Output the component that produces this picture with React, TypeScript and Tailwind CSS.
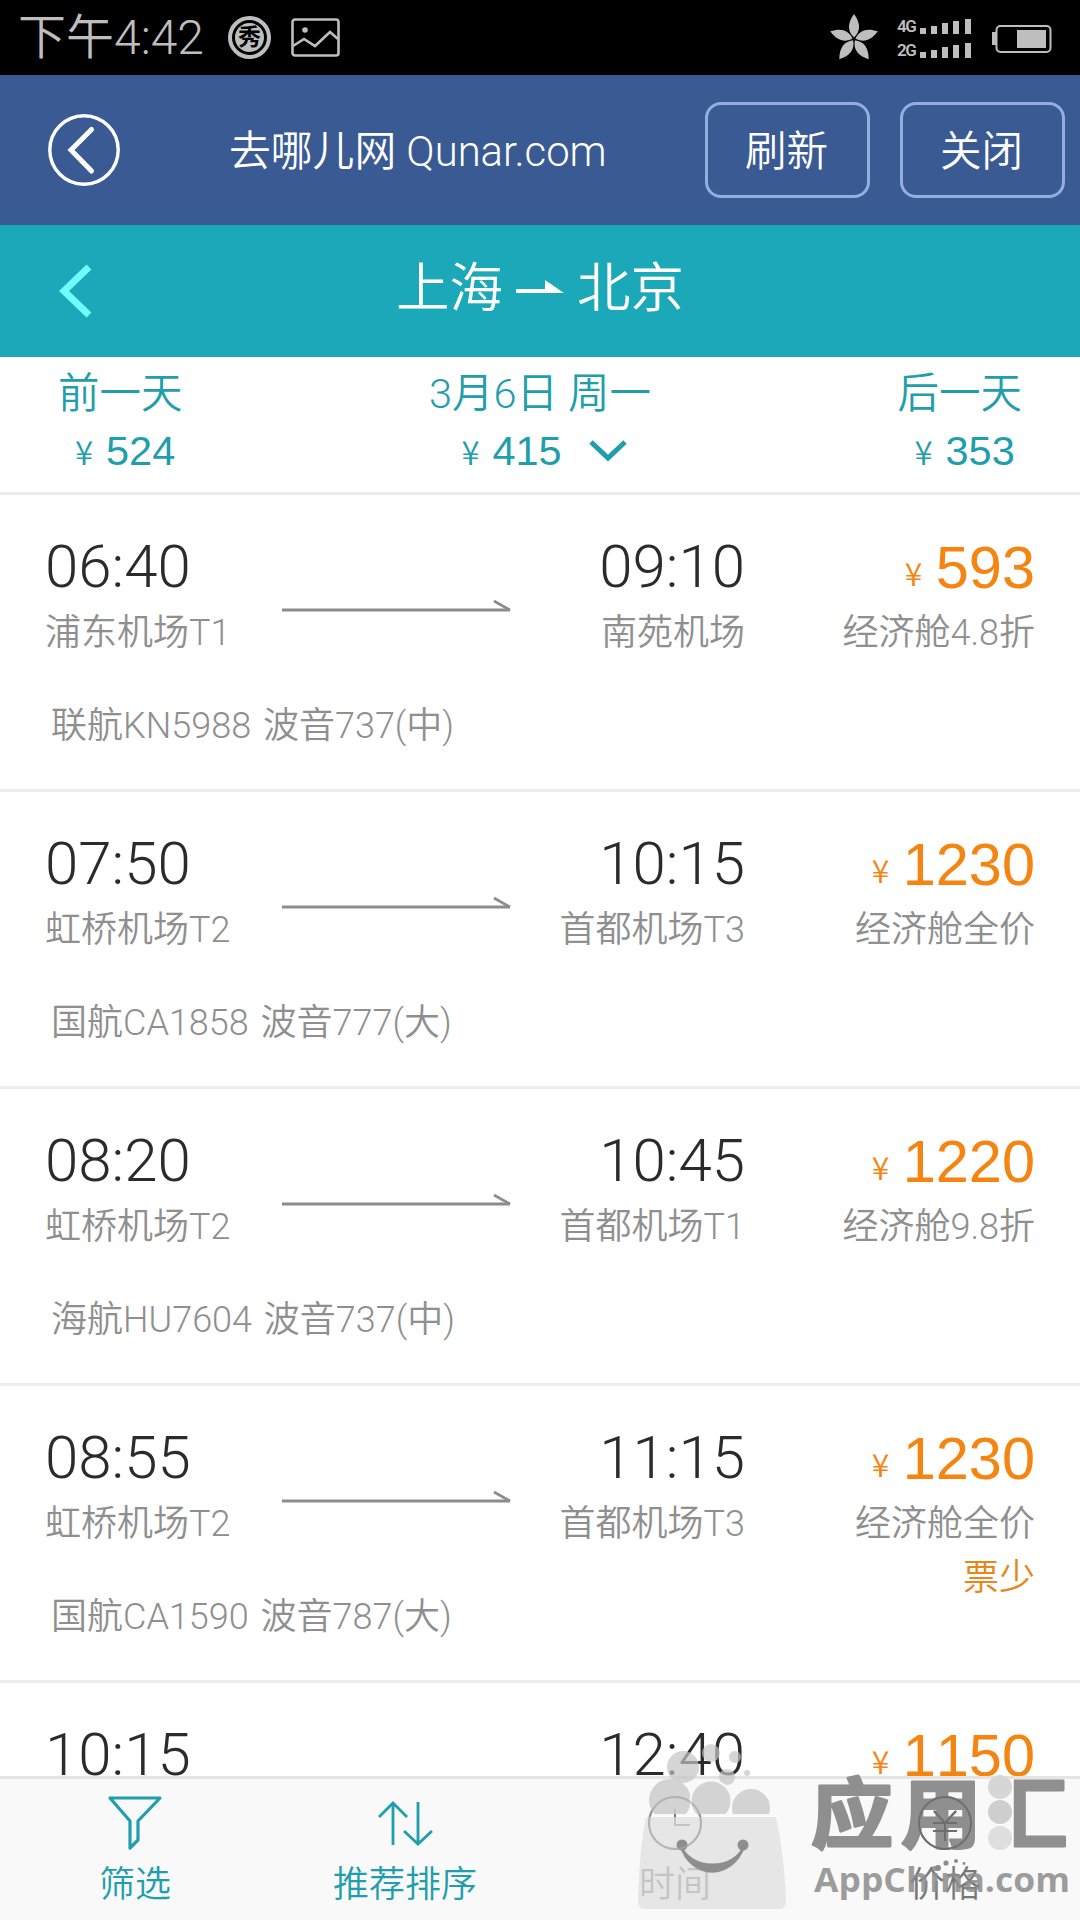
import React from "react";

type Flight = {
  dep: string;
  arr: string;
  from: string;
  to: string;
  price: string;
  cabin: string;
  plane: string;
  note?: string;
};

const flights: Flight[] = [
  { dep: "06:40", arr: "09:10", from: "浦东机场T1", to: "南苑机场", price: "593", cabin: "经济舱4.8折", plane: "联航KN5988 波音737(中)" },
  { dep: "07:50", arr: "10:15", from: "虹桥机场T2", to: "首都机场T3", price: "1230", cabin: "经济舱全价", plane: "国航CA1858 波音777(大)" },
  { dep: "08:20", arr: "10:45", from: "虹桥机场T2", to: "首都机场T1", price: "1220", cabin: "经济舱9.8折", plane: "海航HU7604 波音737(中)" },
  { dep: "08:55", arr: "11:15", from: "虹桥机场T2", to: "首都机场T3", price: "1230", cabin: "经济舱全价", plane: "国航CA1590 波音787(大)", note: "票少" },
  { dep: "10:15", arr: "12:40", from: "", to: "", price: "1150", cabin: "", plane: "" },
];

function StatusBar() {
  return (
    <div className="flex h-[75px] items-center bg-black pl-[18px] pr-[28px] text-[#bebebe]">
      <span className="pt-px text-[48px] leading-[74px] font-[350]">下午4:42</span>
      <span className="ml-[24px] flex size-[43px] items-center justify-center rounded-full border-4 border-[#bebebe]">
        <span className="flex size-[29px] items-center justify-center rounded-full bg-[#bebebe] text-[23px] leading-none font-bold text-black">秀</span>
      </span>
      <svg className="ml-[20px]" width="50" height="40" viewBox="0 0 50 40" fill="none" stroke="#bebebe" strokeWidth="2.6">
        <rect x="1.5" y="1.5" width="46" height="36" rx="2.5" />
        <circle cx="14" cy="12" r="2.8" fill="#bebebe" stroke="none" />
        <path d="M2 28 L13 21 L24 28 L39 14 L47 21" />
      </svg>
      <div className="ml-auto flex items-center">
        <svg width="50" height="50" viewBox="-25 -26 50 50" fill="#bebebe">
          {[0, 72, 144, 216, 288].map((a) => (
            <path key={a} transform={`rotate(${a})`} d="M0 -1.500 C-7 -8 -6.500 -16 0 -25 C6.500 -16 7 -8 0 -1.500Z" />
          ))}
        </svg>
        <div className="ml-[18px] flex flex-col gap-[5px] pb-[3px]">
          {["4G", "2G"].map((g) => (
            <div key={g} className="flex h-[19px] items-end">
              <span className="w-[22px] text-[17px] leading-[15px] font-semibold tracking-[-1.500px]">{g}</span>
              <svg width="54" height="16" viewBox="0 0 54 16" fill="#bebebe">
                <rect x="1" y="10" width="6" height="6" />
                <rect x="12" y="8" width="6" height="8" />
                <rect x="23" y="5" width="6" height="11" />
                <rect x="34" y="3" width="6" height="13" />
                <rect x="46" y="1" width="6" height="15" />
              </svg>
            </div>
          ))}
        </div>
        <svg className="ml-[19px] mt-[2px]" width="60" height="28" viewBox="0 0 60 28">
          <rect x="0" y="7" width="4" height="13" fill="#bebebe" />
          <rect x="4.500" y="1" width="54" height="26" rx="4" fill="none" stroke="#bebebe" strokeWidth="2" />
          <rect x="25" y="5" width="29" height="18" fill="#bebebe" />
        </svg>
      </div>
    </div>
  );
}

function BrowserBar() {
  return (
    <div className="flex h-[150px] items-center bg-[#3a5a94] pr-[15px] pl-[47px] text-[41.5px] font-[350] text-white">
      <svg width="74" height="74" viewBox="0 0 74 74" fill="none" stroke="white" strokeLinecap="round">
        <circle cx="37" cy="37" r="34.2" strokeWidth="3.4" />
        <path d="M44.5 16.5 L24 37 L44.5 58" strokeWidth="5" />
      </svg>
      <span className="ml-[108px] pt-[4px] text-[41.8px] leading-[60px]">去哪儿网 Qunar.com</span>
      <div className="ml-auto flex gap-[30px]">
        {["刷新", "关闭"].map((t) => (
          <button key={t} className="h-[96px] w-[165px] rounded-[16px] border-[3px] border-[#93aee0] pr-[2px] pt-[3px] leading-[87px]">
            {t}
          </button>
        ))}
      </div>
    </div>
  );
}

function RouteBar() {
  return (
    <div className="grid h-[132px] grid-cols-[200px_1fr_200px] items-center bg-[#1ba8b8] text-white">
      <svg className="ml-[56px]" width="40" height="60" viewBox="0 0 40 60" fill="none" stroke="#6dffff" strokeWidth="7">
        <path d="M33 6 L8 30 L33 54" />
      </svg>
      <div className="flex items-center justify-center pb-[4px] text-[53.5px] leading-[80px] font-[350]">
        <span>上海</span>
        <svg className="mx-[13px] -mt-[4px]" width="48" height="20" viewBox="0 0 48 20" fill="white">
          <path d="M0 12 H29 V3 L48 16 H0Z" />
        </svg>
        <span>北京</span>
      </div>
    </div>
  );
}

function DatePrice({ value }: { value: string }) {
  return (
    <span className="flex items-baseline">
      <span className="w-[31px] font-['Noto_Sans_CJK_SC',sans-serif] text-[33px] leading-[50px] font-[350]">¥</span>
      <span className="font-['Liberation_Sans',sans-serif] text-[41.5px] leading-[50px] font-normal">{value}</span>
    </span>
  );
}

function DateBar() {
  return (
    <div className="flex h-[138px] justify-between border-b-[3px] border-[#ececec] px-[58px] pt-[7px] text-[41.5px] leading-[60px] font-[350] text-[#1f9eab]">
      <div className="flex flex-col">
        <span>前一天</span>
        <div className="pl-[17px] pt-[2px]"><DatePrice value="524" /></div>
      </div>
      <div className="flex flex-col items-center">
        <span>3月6日 周一</span>
        <div className="flex items-center gap-[27px] pl-[8px] pt-[2px]">
          <DatePrice value="415" />
          <svg width="38" height="24" viewBox="0 0 38 24" fill="none" stroke="#1f9eab" strokeWidth="5">
            <path d="M2 3 L19 19 L36 3" />
          </svg>
        </div>
      </div>
      <div className="flex flex-col">
        <span>后一天</span>
        <div className="pl-[17px] pt-[2px]"><DatePrice value="353" /></div>
      </div>
    </div>
  );
}

function FlightRow({ f }: { f: Flight }) {
  return (
    <div className="h-[297px] shrink-0 border-b-[3px] border-[#ececec] px-[45px] pt-[39px] text-[36px] leading-[62px] font-[350] text-[#8f8f8f]">
      <div className="flex h-[129px]">
        <div className="w-[237px]">
          <div className="h-[68px] text-[60px] leading-[66px] font-light text-[#2b2b2b]">{f.dep}</div>
          <div>{f.from}</div>
        </div>
        <svg className="mt-[65px]" width="230" height="14" viewBox="0 0 230 14" fill="none" stroke="#8c8c8c" strokeWidth="2.800">
          <path d="M0 11 H228" />
          <path d="M212 2 L228 11" />
        </svg>
        <div className="w-[233px] text-right">
          <div className="h-[68px] text-[60px] leading-[66px] font-light text-[#2b2b2b]">{f.arr}</div>
          <div>{f.to}</div>
        </div>
        <div className="ml-auto text-right">
          <div className="flex h-[68px] items-baseline justify-end pt-px text-[#f58410]">
            <span className="w-[31px] -translate-y-[2px] text-left font-['Noto_Sans_CJK_SC',sans-serif] text-[32px] leading-[66px]">¥</span>
            <span className="font-['Liberation_Sans',sans-serif] text-[59.5px] leading-[66px] font-normal [font-kerning:none]">{f.price}</span>
          </div>
          <div>{f.cabin}</div>
          {f.note && <div className="-mt-[8px] text-[#e8861c]">{f.note}</div>}
        </div>
      </div>
      <div className="mt-[32px] pl-[6px] [word-spacing:3px]">{f.plane}</div>
    </div>
  );
}

function TabItem({ label, children, muted }: { label: string; children: React.ReactNode; muted?: boolean }) {
  return (
    <div className={muted ? "flex flex-1 flex-col items-center text-[#777777]" : "flex flex-1 flex-col items-center text-[#1f9eab]"}>
      <svg width="60" height="60" viewBox="0 0 60 60" fill="none" stroke="currentColor">{children}</svg>
      <span className="mt-[7px] text-[36px] leading-[50px]">{label}</span>
    </div>
  );
}

function TabBar() {
  return (
    <div className="flex h-[144px] shrink-0 border-t-[3px] border-[#e4e4e4] bg-[#f9f9f9] pt-[14px] font-[350]">
      <TabItem label="筛选">
        <path d="M5 5 H55 L33 28 V47 L25 55 V28 Z" strokeWidth="3.2" strokeLinejoin="round" />
      </TabItem>
      <TabItem label="推荐排序">
        <path d="M18 52 V11 M4 24 L18 10 L32 24 M43 9 V51 M29 38 L43 51 L57 38" strokeWidth="2.8" />
      </TabItem>
      <TabItem label="时间" muted>
        <circle cx="30" cy="30" r="26" strokeWidth="2" />
        <path d="M30 16 V32 H45" strokeWidth="2" />
      </TabItem>
      <TabItem label="价格" muted>
        <circle cx="30" cy="30" r="26" strokeWidth="2" />
        <path d="M19 18 L30 30 L41 18 M30 30 V48 M18 30 H42 M18 38 H42" strokeWidth="2" />
      </TabItem>
    </div>
  );
}

function Watermark() {
  return (
    <svg className="pointer-events-none absolute bottom-0 right-0" width="460" height="190" viewBox="620 1730 460 190">
      <defs>
        <clipPath id="fruit"><rect x="640" y="1770" width="140" height="44" /></clipPath>
        <clipPath id="hui"><rect x="26" y="-90" width="70" height="110" /></clipPath>
      </defs>
      <g fill="#c4c4c4" fillOpacity="0.7">
        <circle cx="683" cy="1767" r="16" />
        <circle cx="711" cy="1753" r="9" />
        <circle cx="735" cy="1757" r="6" />
        <circle cx="727" cy="1777" r="8" />
        <circle cx="747" cy="1773" r="3" />
      </g>
      <g fill="#cdcdcd" fillOpacity="0.85" clipPath="url(#fruit)">
        <circle cx="670" cy="1800" r="21" />
        <circle cx="711" cy="1801" r="20.5" stroke="#f9f9f9" strokeWidth="2" />
        <circle cx="751" cy="1808" r="20" stroke="#f9f9f9" strokeWidth="2" />
      </g>
      <path d="M646 1817 H776 C781 1840 785 1870 786 1902 Q786 1909 779 1909 H645 Q638 1909 638 1902 C639 1870 641 1840 646 1817Z" fill="#dedede" fillOpacity="0.74" />
      <circle cx="682" cy="1845" r="5.5" fill="#8e8e8e" />
      <circle cx="743" cy="1845" r="5.5" fill="#8e8e8e" />
      <path d="M681 1846 C692 1880 732 1880 744 1846 C735 1871 690 1871 681 1846Z" fill="#8e8e8e" stroke="#8e8e8e" strokeWidth="2.5" strokeLinejoin="round" />
      <g fill="#8f8f8f" stroke="#8f8f8f" strokeWidth="3" strokeLinejoin="round" className="font-['Noto_Sans_CJK_SC',sans-serif] text-[78px] font-bold">
        <text transform="translate(811 1842) scale(1.05 0.98)">应</text>
        <text transform="translate(901 1842) scale(1.03 0.98)">用</text>
        <text transform="translate(987 1842) scale(1.03 0.98)" clipPath="url(#hui)">汇</text>
      </g>
      <g fill="#cfcfcf">
        <circle cx="1000" cy="1787" r="12" fill="#d6d6d6" />
        <circle cx="1000" cy="1812" r="12" />
        <circle cx="1000" cy="1838" r="12" fill="#dedede" />
      </g>
      <text x="814" y="1892" textLength="256" lengthAdjust="spacingAndGlyphs" fill="#8b8b8b" fillOpacity="0.85" className="font-['Open_Sans',sans-serif] text-[34px] font-bold">AppChina.com</text>
      <g fill="#8b8b8b">
        <circle cx="938" cy="1868" r="3" />
        <circle cx="946" cy="1863" r="2.6" />
        <circle cx="956" cy="1861" r="2" />
        <circle cx="964" cy="1863.500" r="1.400" />
      </g>
      <g fill="none" stroke="#6e6e6e" strokeWidth="2">
        <circle cx="945" cy="1823" r="26" />
        <path d="M934 1811 L945 1823 L956 1811 M945 1823 V1841 M933 1823 H957 M933 1831 H957" />
      </g>
      <circle cx="675" cy="1823" r="26" fill="none" stroke="#a8a8a8" strokeOpacity="0.6" strokeWidth="2" />
    </svg>
  );
}

export default function App() {
  return (
    <div className="relative flex h-[1920px] w-[1080px] flex-col overflow-hidden bg-white font-['Roboto','Noto_Sans_CJK_SC',sans-serif] whitespace-nowrap">
      <StatusBar />
      <BrowserBar />
      <RouteBar />
      <DateBar />
      <div className="flex min-h-0 flex-1 flex-col overflow-hidden">
        {flights.map((f) => (
          <FlightRow key={f.dep} f={f} />
        ))}
      </div>
      <TabBar />
      <Watermark />
    </div>
  );
}
